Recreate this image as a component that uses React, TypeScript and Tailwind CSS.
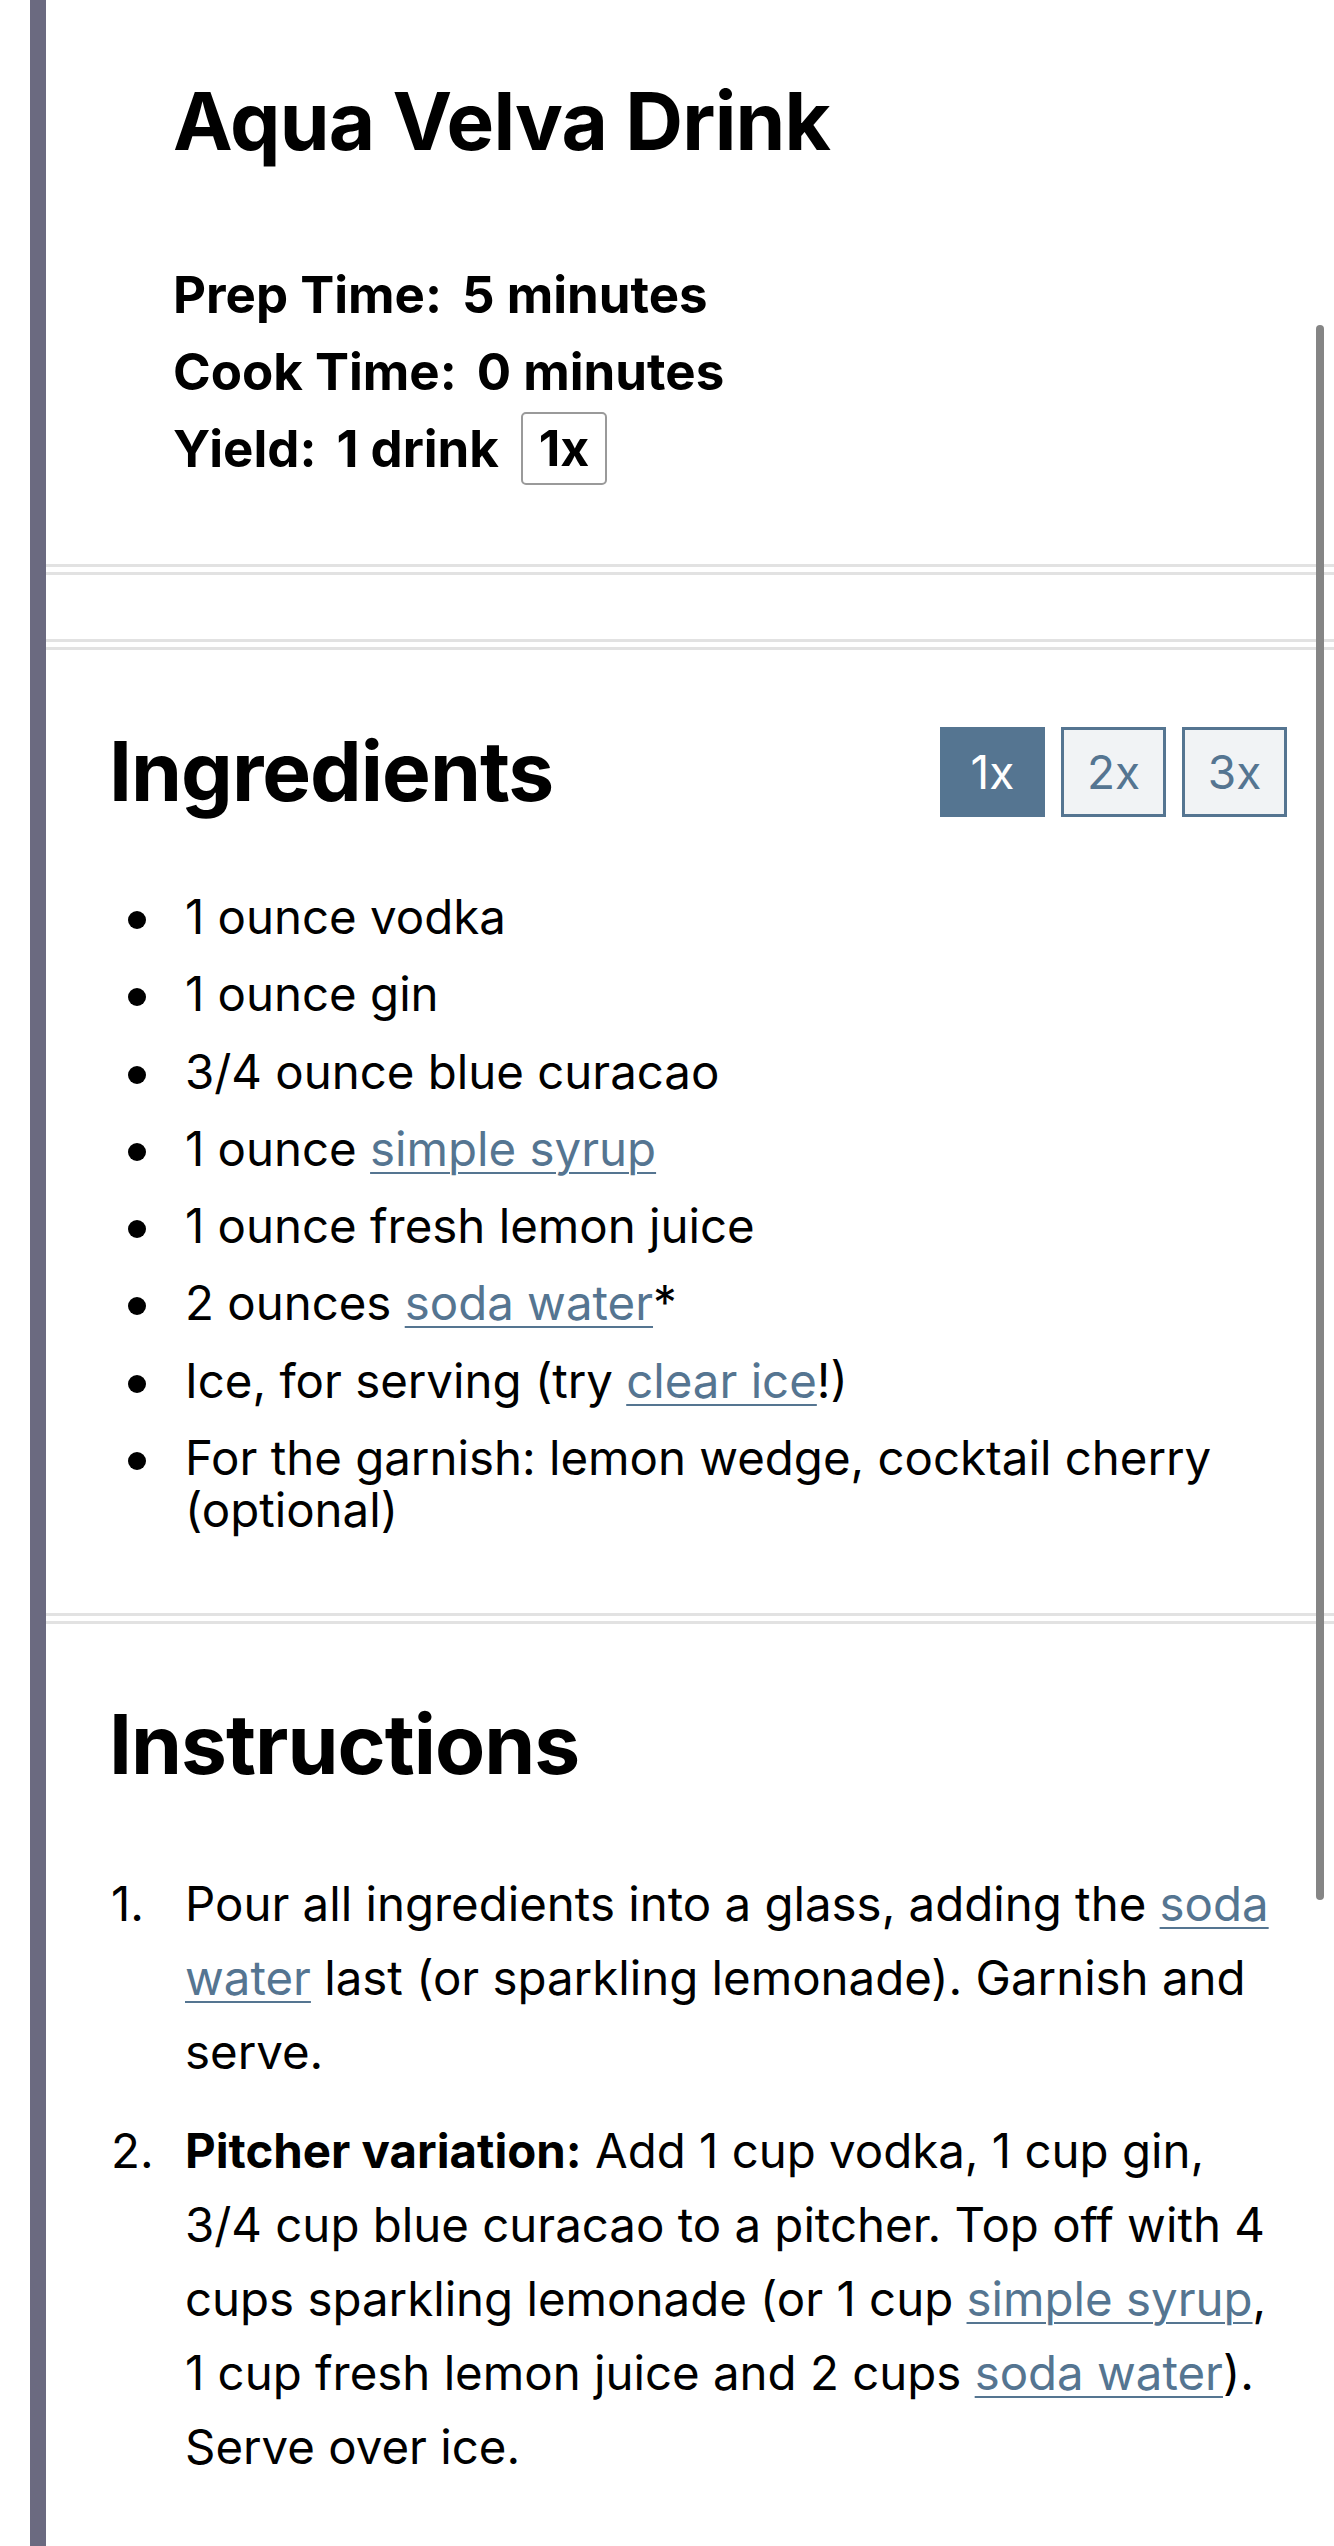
import React from 'react';

const LINK = 'text-[#557591] underline decoration-[2px] underline-offset-[6px]';

const ingredients: React.ReactNode[] = [
  '1 ounce vodka',
  '1 ounce gin',
  '3/4 ounce blue curacao',
  <>1 ounce <a className={LINK}>simple syrup</a></>,
  '1 ounce fresh lemon juice',
  <>2 ounces <a className={LINK}>soda water</a>*</>,
  <>Ice, for serving (try <a className={LINK}>clear ice</a>!)</>,
  'For the garnish: lemon wedge, cocktail cherry (optional)',
];

const DoubleRule = () => (
  <div className="flex flex-col gap-[5px]">
    <div className="h-[3px] bg-[#e2e2e2]" />
    <div className="h-[3px] bg-[#e2e2e2]" />
  </div>
);

const MetaRow = ({ label, value, children }: { label: string; value: string; children?: React.ReactNode }) => (
  <div className="flex items-center h-[77px] text-[51px] leading-[77px] font-bold">
    <span className="mr-[20px]">{label}</span>
    <span>{value}</span>
    {children}
  </div>
);

export default function App() {
  return (
    <div className="relative min-h-[2546px] bg-white text-black font-[Inter,sans-serif]">
      <div className="ml-[30px] border-l-[16px] border-[#6b6a80] min-h-[2546px]">
        {/* header */}
        <div className="pt-[73px] pb-[77px] pl-[127px]">
          <h1 className="text-[80px] leading-[96px] font-bold tracking-[-0.8px]">Aqua Velva Drink</h1>
          <div className="mt-[87px]">
            <MetaRow label="Prep Time:" value="5 minutes" />
            <MetaRow label="Cook Time:" value="0 minutes" />
            <MetaRow label="Yield:" value="1 drink">
              <span className="ml-[22px] w-[86px] h-[73px] flex items-center justify-center border-2 border-[#9a9a9a] rounded-[5px] text-[50px] font-bold">
                1x
              </span>
            </MetaRow>
          </div>
        </div>

        <DoubleRule />
        <div className="h-[64px]" />
        <DoubleRule />

        {/* ingredients */}
        <div className="pl-[63px] pr-[47px] pt-[73px] pb-[77px]">
          <div className="flex items-center justify-between">
            <h2 className="text-[82px] leading-[98px] font-bold tracking-[-1px]">Ingredients</h2>
            <div className="flex gap-[16px]">
              <button className="w-[105px] h-[90px] bg-[#557591] border-[3px] border-[#557591] text-white text-[46px] font-normal">
                1x
              </button>
              <button className="w-[105px] h-[90px] bg-[#f1f3f5] border-[3px] border-[#557591] text-[#557591] text-[46px] font-normal">
                2x
              </button>
              <button className="w-[105px] h-[90px] bg-[#f1f3f5] border-[3px] border-[#557591] text-[#557591] text-[46px] font-normal">
                3x
              </button>
            </div>
          </div>
          <ul className="mt-[70px] flex flex-col gap-[25.3px]">
            {ingredients.map((item, i) => (
              <li key={i} className="flex text-[47.4px] leading-[52px]">
                <div className="w-[76px] shrink-0">
                  <div className="mt-[20px] ml-[19px] w-[18px] h-[18px] rounded-full bg-black" />
                </div>
                <div>{item}</div>
              </li>
            ))}
          </ul>
        </div>

        <DoubleRule />

        {/* instructions */}
        <div className="pl-[63px] pr-[47px] pt-[72px]">
          <h2 className="text-[82px] leading-[98px] font-bold tracking-[-1px]">Instructions</h2>
          <ol className="mt-[73px] flex flex-col gap-[25px] text-[47.4px] leading-[74px]">
            <li className="flex">
              <div className="w-[76px] shrink-0 pl-[2px]">1.</div>
              <div>
                Pour all ingredients into a glass, adding the <a className={LINK}>soda water</a> last (or sparkling
                lemonade). Garnish and serve.
              </div>
            </li>
            <li className="flex">
              <div className="w-[76px] shrink-0 pl-[2px]">2.</div>
              <div>
                <strong className="font-bold">Pitcher variation:</strong> Add 1 cup vodka, 1 cup gin, 3/4 cup blue
                curacao to a pitcher. Top off with 4 cups sparkling lemonade (or 1 cup{' '}
                <a className={LINK}>simple syrup</a>, 1 cup fresh lemon juice and 2 cups{' '}
                <a className={LINK}>soda water</a>). Serve over ice.
              </div>
            </li>
          </ol>
        </div>
      </div>

      {/* scroll indicator */}
      <div className="absolute left-[1316px] top-[325px] w-[8px] h-[1575px] rounded-full bg-[#858585]" />
    </div>
  );
}
